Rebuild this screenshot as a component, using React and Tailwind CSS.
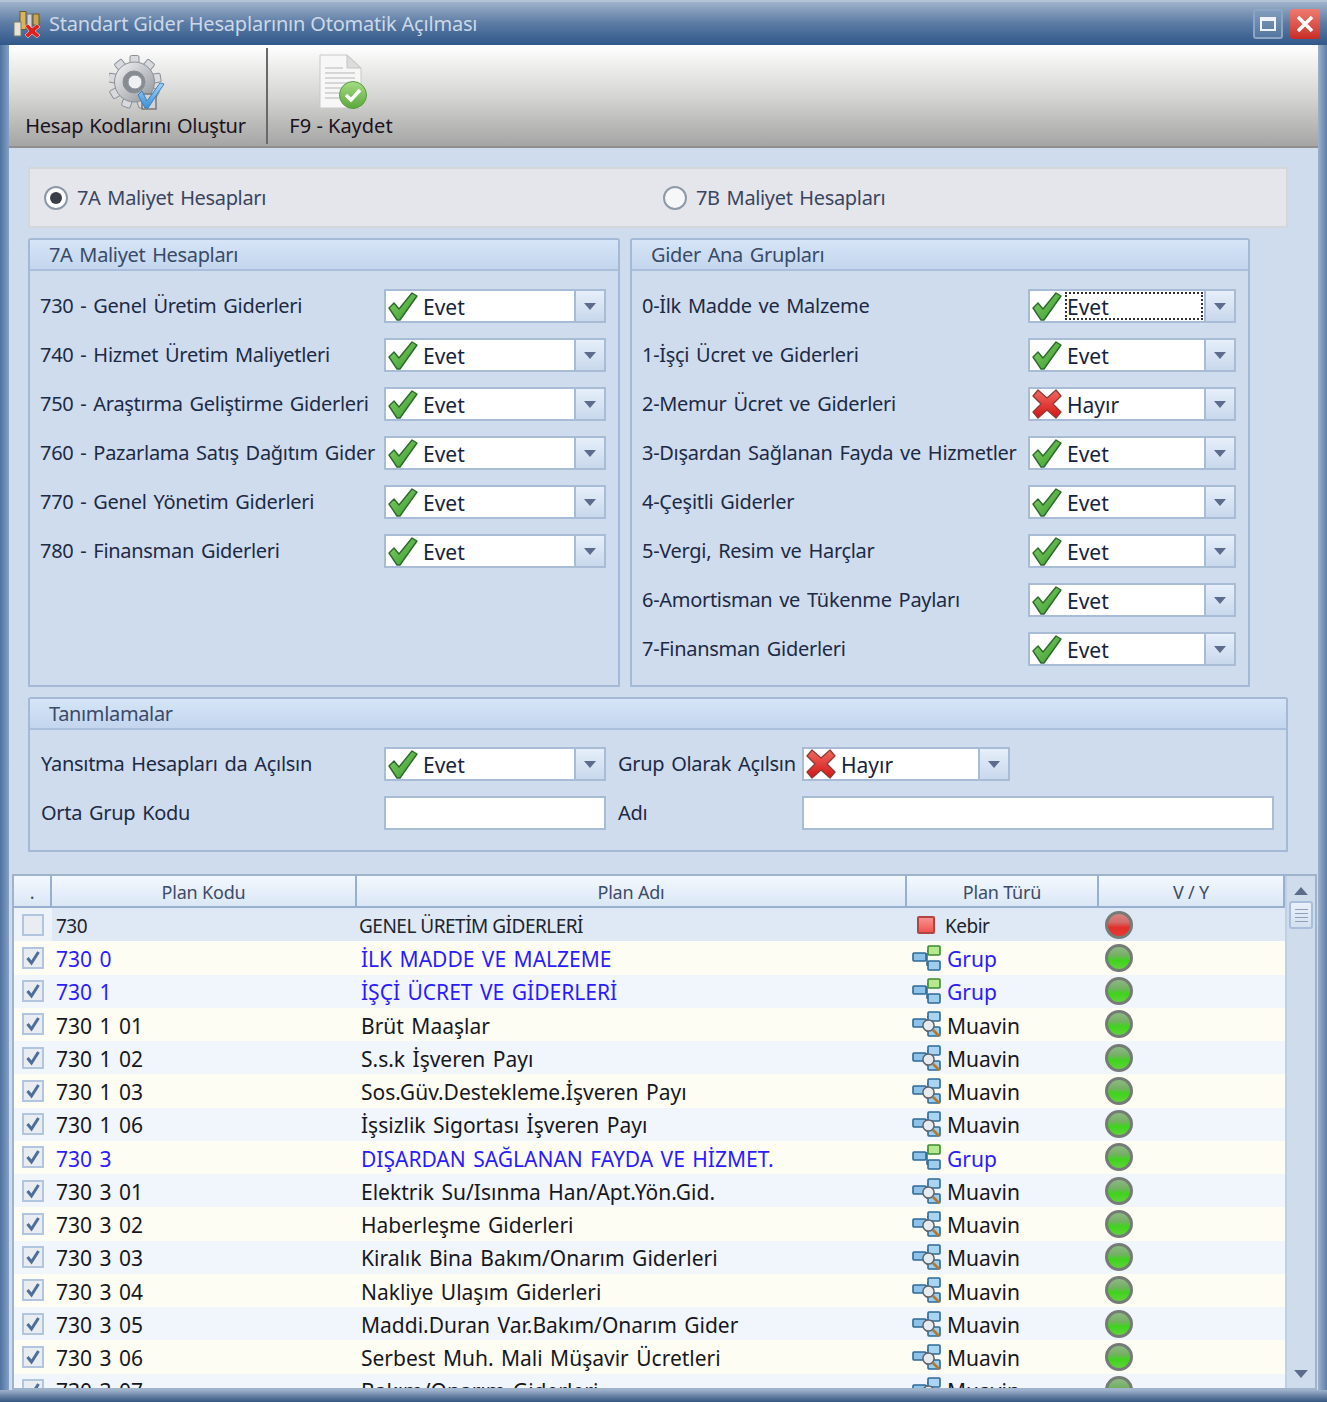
import React from "react";

function Check({ className = "w-[32px] h-[30px]" }) {
  return (
    <svg viewBox="0 0 32 30" className={className}>
      <defs>
        <linearGradient id="ck" x1="0" y1="0" x2="1" y2="1">
          <stop offset="0" stopColor="#8ed06a" />
          <stop offset="1" stopColor="#2f9a2a" />
        </linearGradient>
      </defs>
      <path d="M2 17 L7 12 L12 18 L25 2 L30 5 L13 29 L10 29 Z" fill="url(#ck)" stroke="#2c6a2c" strokeWidth="1.4" strokeLinejoin="round" />
    </svg>
  );
}

function Cross({ className = "w-[32px] h-[30px]" }) {
  return (
    <svg viewBox="0 0 32 30" className={className}>
      <defs>
        <linearGradient id="cx" x1="0" y1="0" x2="0" y2="1">
          <stop offset="0" stopColor="#f06a60" />
          <stop offset="1" stopColor="#d41414" />
        </linearGradient>
      </defs>
      <path d="M2 7 L7 1 L16 9 L25 1 L30 7 L22 15 L30 23 L25 29 L16 21 L7 29 L2 23 L10 15 Z" fill="url(#cx)" stroke="#8c3a3a" strokeWidth="1.3" strokeLinejoin="round" />
    </svg>
  );
}

function Arrow({ up = false, className = "w-[12px] h-[7px]" }) {
  return (
    <svg viewBox="0 0 12 7" className={className}>
      <path d={up ? "M0 7 L6 0 L12 7 Z" : "M0 0 L12 0 L6 7 Z"} fill="#5d6c8c" />
    </svg>
  );
}

function Combo({ value = "Evet", w = "w-[222px]", focus = false }) {
  const yes = value === "Evet";
  return (
    <div className={"h-[34px] flex shrink-0 border-2 border-[#a9bcd6] bg-white " + w}>
      <div className="flex-1 flex items-center pl-[1px] min-w-0">
        {yes ? <Check /> : <Cross />}
        <span
          className={
            "h-[28px] flex-1 mr-[1px] flex items-center leading-none pt-[2px] text-[21px] text-[#15233f] " +
            (focus ? "ml-[2px] border-2 border-dotted border-[#333]" : "ml-[4px]")
          }
        >
          {value}
        </span>
      </div>
      <div className="w-[30px] shrink-0 border-l-2 border-[#a9bcd6] bg-gradient-to-b from-[#e6effa] to-[#c8d8ec] flex items-center justify-center">
        <Arrow />
      </div>
    </div>
  );
}

function Label({ children, w }) {
  return (
    <div className={"shrink-0 whitespace-nowrap text-[20px] tracking-[-0.3px] text-[#1c2a45] [word-spacing:2px] " + w}>
      {children}
    </div>
  );
}

function Group({ title, w, h, children }) {
  return (
    <div className={"shrink-0 border-2 border-[#a4b9d5] rounded-t-[3px] " + w + " " + h}>
      <div className="h-[31px] pl-[19px] flex items-center text-[20px] tracking-[-0.35px] text-[#3a4a68] bg-gradient-to-b from-[#d6e5f7] to-[#c3d6ee] border-b-2 border-[#a9bfdb] [word-spacing:2px]">
        {title}
      </div>
      {children}
    </div>
  );
}

function Gear() {
  const teeth = [0, 40, 80, 120, 160, 200, 240, 280, 320];
  return (
    <svg viewBox="0 0 56 58" className="w-[56px] h-[58px]">
      <defs>
        <linearGradient id="gr" x1="0" y1="0" x2="1" y2="1">
          <stop offset="0" stopColor="#f5f6f7" />
          <stop offset="1" stopColor="#8d9298" />
        </linearGradient>
        <linearGradient id="gb" x1="0" y1="0" x2="0" y2="1">
          <stop offset="0" stopColor="#a9d5f4" />
          <stop offset="1" stopColor="#3c8fd6" />
        </linearGradient>
      </defs>
      <g stroke="#8b9096" strokeWidth="1">
        {teeth.map((a) => (
          <rect key={a} x="21" y="0.5" width="9" height="12" rx="1.5" fill="#d8dade" transform={`rotate(${a} 25.5 27)`} />
        ))}
        <circle cx="25.5" cy="27" r="20" fill="url(#gr)" />
        <circle cx="25" cy="27" r="11" fill="#878c93" />
        <circle cx="26" cy="27" r="7" fill="#eef0f2" />
      </g>
      <rect x="33" y="39" width="14" height="15" fill="#cfd2d6" stroke="#777" strokeWidth="1.5" />
      <path d="M33 36 L38 46 L51 28 L55 29 L39 53 L36 53 L29 40 Z" fill="url(#gb)" stroke="#3a7fc0" strokeWidth="1" />
    </svg>
  );
}

function Doc() {
  return (
    <svg viewBox="0 0 52 56" className="w-[52px] h-[56px]">
      <defs>
        <linearGradient id="dg" x1="0" y1="0" x2="0" y2="1">
          <stop offset="0" stopColor="#a5dc83" />
          <stop offset="1" stopColor="#5aa83c" />
        </linearGradient>
      </defs>
      <path d="M3 1 H30 L44 14 V54 H3 Z" fill="#f7f7f7" stroke="#c9c9c9" strokeWidth="1" />
      <path d="M30 1 V14 H44 Z" fill="#dcdcdc" stroke="#c4c4c4" strokeWidth="1" />
      <g stroke="#b5b5b5" strokeWidth="1">
        {[14, 19, 24, 29, 34, 39, 44].map((y) => (
          <line key={y} x1="8" x2={y < 16 ? 26 : 38} y1={y} y2={y} />
        ))}
      </g>
      <circle cx="36" cy="41" r="13.5" fill="url(#dg)" stroke="#5a9a45" strokeWidth="1" />
      <path d="M29 41 L34 46 L43 36" fill="none" stroke="#fff" strokeWidth="3.5" />
    </svg>
  );
}

function TitleIcon() {
  return (
    <svg viewBox="0 0 28 28" className="w-[28px] h-[28px]">
      <rect x="7" y="1.5" width="6" height="18" fill="#d8b45c" stroke="#6d5a2a" />
      <rect x="14" y="4" width="5" height="15" fill="#cfd3d6" stroke="#6b6f73" />
      <rect x="20" y="4" width="6" height="11" fill="#c9a64f" stroke="#6d5a2a" />
      <rect x="1" y="12" width="7" height="14" fill="#e6e3d6" stroke="#7a7a6a" />
      <path d="M12 16 L15 14 L19 18 L24 14 L27 17 L22 21 L27 25 L24 28 L19 24 L15 28 L12 25 L16 21 Z" fill="#e0201c" stroke="#fff" strokeWidth="0.5" />
    </svg>
  );
}

function TreeIcon({ kind }) {
  const top = kind === "Grup" ? ["#b6e88e", "#3d8a2c"] : ["#a9d4f2", "#2c6a96"];
  return (
    <svg viewBox="0 0 29 26" className="w-[29px] h-[26px]">
      <path d="M13 9 H15 V20 H16 M15 6 H16" stroke="#315f86" strokeWidth="1.5" fill="none" />
      <rect x="1" y="8" width="13" height="8" rx="1" fill="#8fc2e8" stroke="#2c6a96" strokeWidth="1.6" />
      <rect x="16" y="1" width="12" height="9" rx="1" fill={top[0]} stroke={top[1]} strokeWidth="1.6" />
      <rect x="16" y="16" width="12" height="9" rx="1" fill="#9fcdec" stroke="#2c6a96" strokeWidth="1.6" />
      {kind === "Muavin" && (
        <g>
          <line x1="21" y1="19" x2="27" y2="25" stroke="#b07a30" strokeWidth="2.6" />
          <circle cx="16.5" cy="14.5" r="5.6" fill="#e5ebf0" stroke="#5f6368" strokeWidth="1.5" />
        </g>
      )}
    </svg>
  );
}

function Led({ red = false }) {
  return (
    <div
      className={
        "w-[28px] h-[28px] rounded-full border-[3px] border-[#757b76] " +
        (red
          ? "bg-[linear-gradient(180deg,#d58684_0%,#d46a68_38%,#e22e2a_62%,#e63a34_100%)]"
          : "bg-[linear-gradient(180deg,#8db983_0%,#74b064_38%,#3fd41c_62%,#62d03e_100%)]")
      }
    />
  );
}

function Box({ checked }) {
  return (
    <div className="w-[22px] h-[22px] border-2 border-[#b1c5de] bg-[#e9ecf0] p-[1px] flex items-center justify-center">
      {checked && (
        <svg viewBox="0 0 16 16" className="w-[16px] h-[16px]">
          <path d="M2.5 8 L6.5 13 L13.5 2" fill="none" stroke="#4d6e99" strokeWidth="3" />
        </svg>
      )}
    </div>
  );
}

const leftRows = [
  "730 - Genel Üretim Giderleri",
  "740 - Hizmet Üretim Maliyetleri",
  "750 - Araştırma Geliştirme Giderleri",
  "760 - Pazarlama Satış Dağıtım Gider",
  "770 - Genel Yönetim Giderleri",
  "780 - Finansman Giderleri",
];
const rightRows = [
  ["0-İlk Madde ve Malzeme", "Evet", true],
  ["1-İşçi Ücret ve Giderleri", "Evet"],
  ["2-Memur Ücret ve Giderleri", "Hayır"],
  ["3-Dışardan Sağlanan Fayda ve Hizmetler", "Evet"],
  ["4-Çeşitli Giderler", "Evet"],
  ["5-Vergi, Resim ve Harçlar", "Evet"],
  ["6-Amortisman ve Tükenme Payları", "Evet"],
  ["7-Finansman Giderleri", "Evet"],
];
const rows = [
  ["730 0", "İLK MADDE VE MALZEME", "Grup"],
  ["730 1", "İŞÇİ ÜCRET VE GİDERLERİ", "Grup"],
  ["730 1 01", "Brüt Maaşlar", "Muavin"],
  ["730 1 02", "S.s.k İşveren Payı", "Muavin"],
  ["730 1 03", "Sos.Güv.Destekleme.İşveren Payı", "Muavin"],
  ["730 1 06", "İşsizlik Sigortası İşveren Payı", "Muavin"],
  ["730 3", "DIŞARDAN SAĞLANAN FAYDA VE HİZMET.", "Grup"],
  ["730 3 01", "Elektrik Su/Isınma Han/Apt.Yön.Gid.", "Muavin"],
  ["730 3 02", "Haberleşme Giderleri", "Muavin"],
  ["730 3 03", "Kiralık Bina Bakım/Onarım Giderleri", "Muavin"],
  ["730 3 04", "Nakliye Ulaşım Giderleri", "Muavin"],
  ["730 3 05", "Maddi.Duran Var.Bakım/Onarım Gider", "Muavin"],
  ["730 3 06", "Serbest Muh. Mali Müşavir Ücretleri", "Muavin"],
  ["730 3 07", "Bakım/Onarım Giderleri", "Muavin"],
];

function HeadCell({ w, children }) {
  return (
    <div className={"shrink-0 flex items-center justify-center pt-[2px] border-r-2 border-[#98b0cf] text-[18px] tracking-[-0.2px] text-[#3d4c68] " + w}>
      {children}
    </div>
  );
}

export default function App() {
  return (
    <div
      className="w-[1327px] h-[1402px] overflow-hidden bg-[#5f7fa9] flex flex-col"
      style={{ fontFamily: '"Noto Sans", "Open Sans", sans-serif' }}
    >
      <div className="h-[45px] shrink-0 flex items-center border-t-2 border-[#b4c3d6] bg-gradient-to-b from-[#9fb2ca] via-[#5b7ba4] to-[#30588a]">
        <div className="ml-[13px] w-[28px]">
          <TitleIcon />
        </div>
        <div className="ml-[8px] flex-1 text-[20px] tracking-[-0.2px] text-[#ccd8e7]">Standart Gider Hesaplarının Otomatik Açılması</div>
        <div className="w-[30px] h-[30px] mr-[7px] rounded-[3px] border-2 border-[#8da5c4] bg-gradient-to-b from-[#7f9bbd] to-[#55779f] flex items-center justify-center">
          <div className="w-[16px] h-[14px] border-2 border-t-4 border-[#eef3f9]" />
        </div>
        <div className="w-[30px] h-[30px] mr-[7px] rounded-[3px] bg-gradient-to-b from-[#ee7a70] to-[#c92a26] flex items-center justify-center">
          <svg viewBox="0 0 18 18" className="w-[18px] h-[18px]">
            <path d="M2 2 L16 16 M16 2 L2 16" stroke="#fff" strokeWidth="3.6" />
          </svg>
        </div>
      </div>

      <div className="flex flex-1 min-h-0">
        <div className="w-[9px] shrink-0 bg-gradient-to-r from-[#4f72a0] to-[#85a0c2]" />
        <div className="w-[1309px] shrink-0 bg-[#cfdced] flex flex-col">
          <div className="h-[103px] shrink-0 flex items-end border-b-2 border-[#8f8f8f] bg-gradient-to-b from-[#ffffff] via-[#d6d6d4] to-[#a5a5a5]">
            <div className="w-[257px] shrink-0 h-full flex flex-col items-center">
              <div className="mt-[10px] h-[56px] mr-[2px]">
                <Gear />
              </div>
              <div className="mr-[4px] text-[20px] tracking-[-0.25px] text-[#1b1320] [word-spacing:1px]">Hesap Kodlarını Oluştur</div>
            </div>
            <div className="w-[2px] h-[96px] mb-[2px] bg-[#666a6e]" />
            <div className="w-[146px] shrink-0 h-full flex flex-col items-center">
              <div className="mt-[9px] h-[57px] ml-[4px]">
                <Doc />
              </div>
              <div className="text-[20px] text-[#1b1320]">F9 - Kaydet</div>
            </div>
          </div>

          <div className="ml-[19px] mt-[19px] w-[1260px] h-[61px] shrink-0 border-2 border-[#d3d7dc] bg-[#e4e6eb] flex items-center text-[20px] tracking-[-0.35px] [word-spacing:2px] text-[#3a4560]">
            <div className="ml-[14px] w-[24px] h-[24px] rounded-full border-2 border-[#8e99a8] bg-white flex items-center justify-center">
              <div className="w-[12px] h-[12px] rounded-full bg-[#3b3f47]" />
            </div>
            <span className="ml-[9px] w-[586px]">7A Maliyet Hesapları</span>
            <div className="w-[24px] h-[24px] rounded-full border-2 border-[#8e99a8] bg-[#f6f7f9]" />
            <span className="ml-[9px]">7B Maliyet Hesapları</span>
          </div>

          <div className="ml-[19px] mt-[10px] flex gap-[10px] shrink-0">
            <Group title="7A Maliyet Hesapları" w="w-[592px]" h="h-[449px]">
              <div className="pl-[10px] pt-[18px] flex flex-col gap-[15px]">
                {leftRows.map((t) => (
                  <div key={t} className="flex items-center h-[34px]">
                    <Label w="w-[344px] -mt-[1px]">{t}</Label>
                    <Combo />
                  </div>
                ))}
              </div>
            </Group>
            <Group title="Gider Ana Grupları" w="w-[620px]" h="h-[449px]">
              <div className="pl-[10px] pt-[18px] flex flex-col gap-[15px]">
                {rightRows.map(([t, v, f]) => (
                  <div key={t} className="flex items-center h-[34px]">
                    <Label w="w-[386px] -mt-[1px]">{t}</Label>
                    <Combo w="w-[208px]" value={v} focus={f} />
                  </div>
                ))}
              </div>
            </Group>
          </div>

          <div className="ml-[19px] mt-[10px] shrink-0">
            <Group title="Tanımlamalar" w="w-[1260px]" h="h-[155px]">
              <div className="pl-[11px] pt-[17px] flex flex-col gap-[15px]">
                <div className="flex items-center h-[34px]">
                  <Label w="w-[343px]">Yansıtma Hesapları da Açılsın</Label>
                  <Combo />
                  <Label w="w-[184px] ml-[12px]">Grup Olarak Açılsın</Label>
                  <Combo w="w-[208px]" value="Hayır" />
                </div>
                <div className="flex items-center h-[34px]">
                  <Label w="w-[343px]">Orta Grup Kodu</Label>
                  <div className="w-[222px] h-[34px] border-2 border-[#a9bcd6] bg-white" />
                  <Label w="w-[184px] ml-[12px]">Adı</Label>
                  <div className="w-[472px] h-[34px] border-2 border-[#a9bcd6] bg-white" />
                </div>
              </div>
            </Group>
          </div>

          <div className="ml-[3px] mt-[22px] w-[1305px] h-[516px] shrink-0 border-2 border-[#9fb3cd] flex overflow-hidden bg-white">
            <div className="w-[1271px] shrink-0 flex flex-col overflow-hidden">
              <div className="h-[32px] shrink-0 flex border-b-2 border-[#98b0cf] bg-gradient-to-b from-[#f3f8fe] to-[#dbe7f6]">
                <HeadCell w="w-[38px]">.</HeadCell>
                <HeadCell w="w-[305px]">Plan Kodu</HeadCell>
                <HeadCell w="w-[550px]">Plan Adı</HeadCell>
                <HeadCell w="w-[192px]">Plan Türü</HeadCell>
                <HeadCell w="w-[186px]">V / Y</HeadCell>
              </div>
              <div className="h-[33.25px] shrink-0 flex items-center bg-[#dfe8f5] text-[19px] text-[#20242c] tracking-[-0.5px]">
                <div className="w-[38px] shrink-0 h-full flex items-center justify-center bg-[#eef3fa]">
                  <Box />
                </div>
                <div className="w-[305px] shrink-0 pl-[4px] pt-[4px]">730</div>
                <div className="w-[550px] shrink-0 pl-[2px] pt-[4px]">GENEL ÜRETİM GİDERLERİ</div>
                <div className="w-[192px] shrink-0 flex items-center pl-[10px]">
                  <div className="w-[18px] h-[18px] rounded-[2px] border-2 border-[#b24442] bg-gradient-to-b from-[#f9908c] to-[#ef5450]" />
                  <span className="ml-[10px] pt-[4px]">Kebir</span>
                </div>
                <div className="pl-[6px]">
                  <Led red />
                </div>
              </div>
              {rows.map(([code, name, type], i) => {
                const link = type === "Grup";
                return (
                  <div
                    key={code}
                    className={
                      "h-[33.25px] shrink-0 flex items-center text-[21px] " +
                      (i % 2 === 0 ? "bg-[#fdfdf4] " : "bg-[#f1f5fc] ") +
                      (link ? "text-[#2a1cff]" : "text-[#171720]")
                    }
                  >
                    <div className="w-[38px] shrink-0 flex items-center justify-center">
                      <Box checked />
                    </div>
                    <div className="w-[305px] shrink-0 pl-[4px] pt-[4px] [word-spacing:2px]">{code}</div>
                    <div className="w-[550px] shrink-0 pl-[4px] pt-[4px] whitespace-nowrap [word-spacing:2px]">{name}</div>
                    <div className="w-[192px] shrink-0 flex items-center pl-[5px]">
                      <TreeIcon kind={type} />
                      <span className="ml-[6px] pt-[4px]">{type}</span>
                    </div>
                    <div className="pl-[6px]">
                      <Led />
                    </div>
                  </div>
                );
              })}
            </div>
            <div className="flex-1 border-l-2 border-[#c0d0e4] bg-[#cfdcec] flex flex-col items-center justify-between pt-[11px] pb-[10px]">
              <div className="flex flex-col items-center">
                <Arrow up className="w-[16px] h-[8px]" />
                <div className="mt-[6px] w-[24px] h-[28px] rounded-[3px] border-2 border-[#a9bedb] bg-gradient-to-b from-[#e9f0f9] to-[#d4e0f0] flex flex-col items-center justify-center gap-[3px]">
                  <div className="w-[13px] h-[1px] bg-[#8ea0ba]" />
                  <div className="w-[13px] h-[1px] bg-[#8ea0ba]" />
                  <div className="w-[13px] h-[1px] bg-[#8ea0ba]" />
                  <div className="w-[13px] h-[1px] bg-[#8ea0ba]" />
                </div>
              </div>
              <Arrow className="w-[16px] h-[8px]" />
            </div>
          </div>
        </div>
        <div className="w-[9px] shrink-0 bg-gradient-to-r from-[#9db1cb] to-[#5f7fa9]" />
      </div>
      <div className="h-[12px] shrink-0 bg-gradient-to-b from-[#9fb2cb] to-[#35547f]" />
    </div>
  );
}
